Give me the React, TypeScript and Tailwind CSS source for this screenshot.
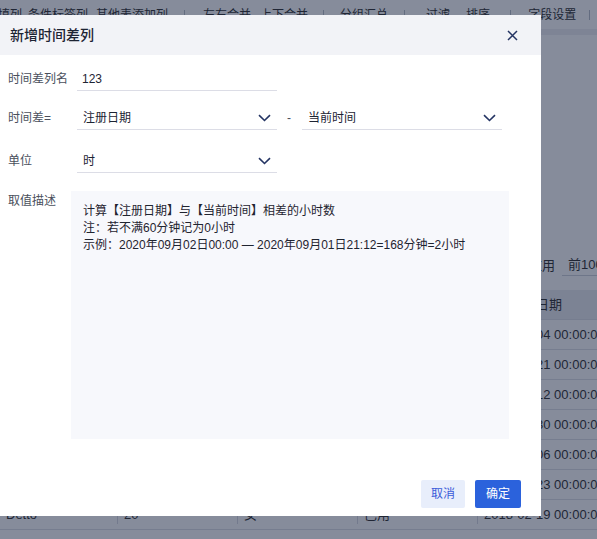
import React from "react";

const font = { fontFamily: '"Liberation Sans", "Noto Sans CJK SC", sans-serif' };

function Chevron() {
    return (
        <svg width="13" height="8" viewBox="0 0 13 8" fill="none">
            <path d="M1 1.2 L6.5 6.5 L12 1.2" stroke="#243463" strokeWidth="1.6" />
        </svg>
    );
}

function Select({ value, className }: { value: string; className: string }) {
    return (
        <div className={`flex h-[24px] items-center justify-between border-b border-[#dcdde6] pl-[6px] pr-[6px] ${className}`}>
            <span className="text-[12px] text-[#1d2433]">{value}</span>
            <Chevron />
        </div>
    );
}

// toolbar items behind the mask: [label, left gap]; "|" is a divider
const toolbar: [string, string][] = [
    ["填列", "ml-[-2px]"],
    ["条件标签列", "ml-[6px]"],
    ["其他表添加列", "ml-[8px]"],
    ["|", "ml-[16px]"],
    ["左右合并", "ml-[18px]"],
    ["上下合并", "ml-[9px]"],
    ["|", "ml-[15px]"],
    ["分组汇总", "ml-[16px]"],
    ["|", "ml-[16px]"],
    ["过滤", "ml-[21px]"],
    ["排序", "ml-[16px]"],
    ["|", "ml-[20px]"],
    ["字段设置", "ml-[17px]"],
    ["|", "ml-[13px]"],
];

const rows = [
    ["Anna", "23", "女", "已用", "2018-03-04 00:00:00"],
    ["Bill", "31", "男", "已用", "2018-05-21 00:00:00"],
    ["Cindy", "27", "女", "未用", "2018-06-12 00:00:00"],
    ["David", "35", "男", "已用", "2018-07-30 00:00:00"],
    ["Emma", "22", "女", "已用", "2018-08-06 00:00:00"],
    ["Frank", "29", "男", "未用", "2018-01-23 00:00:00"],
    ["Detto", "20", "女", "已用", "2018-02-19 00:00:00"],
];

export default function App() {
    return (
        <div className="relative h-[539px] w-[597px] overflow-hidden bg-white" style={font}>
            {/* page behind the dialog */}
            <div className="flex h-[29px] items-center whitespace-nowrap text-[12px] text-[#333]">
                {toolbar.map(([t, gap], i) =>
                    t === "|" ? (
                        <div key={i} className={`h-[10px] w-px shrink-0 bg-[#b9bec8] ${gap}`} />
                    ) : (
                        <span key={i} className={`shrink-0 ${gap}`}>{t}</span>
                    )
                )}
            </div>
            <div className="h-[6px] bg-[#eeeff2]" />
            <div className="flex h-[255px] items-end whitespace-nowrap pb-[15px] pl-[529px] text-[13px] text-[#333]">
                <div className="flex h-[19px] items-center">
                    <span>应用</span>
                    <span className="ml-[7px] w-[60px] shrink-0 border-b border-[#cfd3db] pb-[1px] pl-[6px]">前100条</span>
                </div>
            </div>
            <div className="whitespace-nowrap text-[13px] text-[#333]">
                <div className="grid h-[30px] grid-cols-[117px_120px_120px_120px_140px] items-center border-b border-[#dfe1e6] bg-[#ebecf0]">
                    <span className="pl-[6px]">姓名</span>
                    <span className="pl-[7px]">年龄</span>
                    <span className="pl-[7px]">性别</span>
                    <span className="pl-[7px]">状态</span>
                    <span className="pl-[7px]">最近登录日期</span>
                </div>
                {rows.map((r, i) => (
                    <div key={i} className="grid h-[30px] grid-cols-[117px_120px_120px_120px_140px] items-center border-b border-[#dfe1e6]">
                        {r.map((c, j) => (
                            <span key={j} className={`pl-[6px] ${j > 0 ? "border-l border-[#d8dbe2]" : ""}`}>{c}</span>
                        ))}
                    </div>
                ))}
            </div>

            {/* mask */}
            <div className="absolute inset-0 bg-[#0d1937]/50" />

            {/* dialog */}
            <div className="absolute left-0 top-[15px] flex h-[501px] w-[541px] flex-col bg-white">
                <div className="flex h-[40px] shrink-0 items-center justify-between bg-[#f2f3f7] pl-[10px] pr-[23px]">
                    <span className="text-[14px] font-medium text-[#1d2433]">新增时间差列</span>
                    <svg width="11" height="11" viewBox="0 0 11 11" fill="none">
                        <path d="M1 1 L10 10 M10 1 L1 10" stroke="#243463" strokeWidth="1.5" />
                    </svg>
                </div>
                <div className="flex flex-1 flex-col pl-[8px] pt-[12px] text-[12px]">
                    <div className="flex items-center">
                        <span className="w-[69px] text-[#4a4f5c]">时间差列名</span>
                        <div className="flex h-[24px] w-[200px] items-center border-b border-[#dcdde6] pl-[5px] text-[#1d2433]">123</div>
                    </div>
                    <div className="mt-[15px] flex items-center">
                        <span className="w-[69px] text-[#4a4f5c]">时间差=</span>
                        <Select value="注册日期" className="w-[200px]" />
                        <span className="w-[25px] pl-[10px] text-[#4a4f5c]">-</span>
                        <Select value="当前时间" className="w-[200px]" />
                    </div>
                    <div className="mt-[19px] flex items-center">
                        <span className="w-[69px] text-[#4a4f5c]">单位</span>
                        <Select value="时" className="w-[200px]" />
                    </div>
                    <div className="mt-[18px] flex items-start">
                        <span className="w-[63px] pt-[1px] text-[#4a4f5c]">取值描述</span>
                        <div className="h-[248px] w-[438px] bg-[#f7f8fc] pl-[12px] pt-[12px] text-[12px] leading-[17px] text-[#1f2430]">
                            <div>计算【注册日期】与【当前时间】相差的小时数</div>
                            <div>注：若不满60分钟记为0小时</div>
                            <div>示例：2020年09月02日00:00 — 2020年09月01日21:12=168分钟=2小时</div>
                        </div>
                    </div>
                    <div className="mt-auto flex justify-end gap-[10px] pb-[8px] pr-[20px]">
                        <button className="h-[28px] w-[44px] rounded-[2px] bg-[#e8eefb] text-[12px] text-[#3a5bd9]">取消</button>
                        <button className="h-[28px] w-[46px] rounded-[2px] bg-[#2b62dc] text-[12px] text-white">确定</button>
                    </div>
                </div>
            </div>
        </div>
    );
}
